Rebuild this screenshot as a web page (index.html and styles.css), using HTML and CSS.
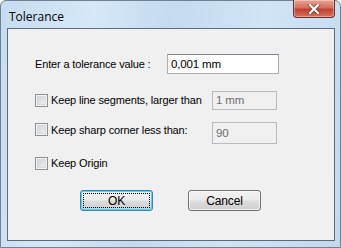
FILE: index.html
```html
<!DOCTYPE html>
<html lang="en">
<head>
    <meta charset="UTF-8">
    <title>Tolerance</title>
    <link rel="stylesheet" href="styles.css">
</head>
<body>
    <div class="window">
        <div class="titlebar">
            <span class="title">Tolerance</span>
            <div class="close-btn">
                <svg width="16" height="10" viewBox="0 0 16 10">
                    <path d="M4 1 L12 9 M12 1 L4 9" stroke="#3a2020" stroke-width="4" stroke-linecap="square" opacity="0.45"/>
                    <path d="M4 1 L12 9 M12 1 L4 9" stroke="#ffffff" stroke-width="2.2" stroke-linecap="square"/>
                </svg>
            </div>
        </div>
        <div class="client">
            <div class="row row-value">
                <span class="label">Enter a tolerance value :</span>
                <div class="textbox">0,001 mm</div>
            </div>
            <div class="row row-check">
                <div class="check-label">
                    <span class="checkbox"></span>
                    <span>Keep line segments, larger than</span>
                </div>
                <div class="textbox disabled">1 mm</div>
            </div>
            <div class="row row-check row-corner">
                <div class="check-label">
                    <span class="checkbox"></span>
                    <span>Keep sharp corner less than:</span>
                </div>
                <div class="textbox disabled tall">90</div>
            </div>
            <div class="row row-origin">
                <div class="check-label">
                    <span class="checkbox"></span>
                    <span>Keep Origin</span>
                </div>
            </div>
            <div class="buttons">
                <div class="button default"><span class="focus">OK</span></div>
                <div class="button">Cancel</div>
            </div>
        </div>
    </div>
</body>
</html>
```

FILE: styles.css
```css
* {
    margin: 0;
    padding: 0;
    box-sizing: border-box;
}

body {
    width: 341px;
    height: 248px;
    overflow: hidden;
    background: #ffffff;
}

/* Aero frame */
.window {
    width: 341px;
    height: 248px;
    display: flex;
    flex-direction: column;
    border: 1px solid #6f8193;
    border-radius: 6px 6px 0 0;
    background: linear-gradient(100deg, #c6dcf0 0%, #d6e8f7 25%, #c4daef 45%, #d0e4f5 70%, #c2d9ee 100%);
    padding: 0 5px 6px 6px;
    font-family: "Liberation Sans", Arial, sans-serif;
    font-size: 11px;
    letter-spacing: -0.15px;
    color: #000;
}

.titlebar {
    height: 27px;
    display: flex;
    align-items: flex-start;
    justify-content: space-between;
    flex-shrink: 0;
}

.title {
    font-family: "Open Sans", "Noto Sans", sans-serif;
    font-size: 12px;
    letter-spacing: 0;
    margin-top: 7px;
    margin-left: 2px;
    color: #000;
}

.close-btn {
    width: 42px;
    height: 18px;
    margin-top: -1px;
    border: 1px solid #6b3030;
    border-top: none;
    border-radius: 0 0 4px 4px;
    background: linear-gradient(#e8a492 0%, #d4705f 45%, #c0402e 55%, #d8735a 100%);
    box-shadow: inset 0 0 0 1px rgba(255, 255, 255, 0.35);
    display: flex;
    align-items: center;
    justify-content: center;
}

/* dialog body */
.client {
    flex: 1;
    background: #f0f0f0;
    border: 1px solid #5d6b7a;
    padding: 25px 0 0 27px;
    display: flex;
    flex-direction: column;
}

.row {
    display: flex;
    align-items: center;
}

.row-value {
    height: 20px;
}

.row-value .label {
    width: 132px;
}

.row-check {
    height: 20px;
    margin-top: 16px;
}

.row-corner {
    height: 22px;
    margin-top: 12px;
    align-items: flex-start;
}

.row-corner .check-label {
    margin-top: 1px;
}

.row-origin {
    height: 14px;
    margin-top: 12px;
}

.check-label {
    width: 177px;
    display: flex;
    align-items: center;
    gap: 3px;
}

.checkbox {
    width: 13px;
    height: 13px;
    border: 1px solid #8e8f8f;
    background: linear-gradient(135deg, #cbcfd5 0%, #f4f4f4 100%);
    box-shadow: inset 0 0 0 1px #f4f4f4, inset 0 0 0 2px #d6d9de;
    flex-shrink: 0;
}

.textbox {
    width: 112px;
    height: 20px;
    background: #fff;
    border: 1px solid #abadb3;
    border-top-color: #7f8288;
    padding: 0 3px;
    line-height: 18px;
    font-size: 11.5px;
}

.textbox.disabled {
    width: 65px;
    height: 19px;
    background: #f0f0f0;
    border-color: #b7bcc0;
    color: #6d6d6d;
    line-height: 17px;
}

.textbox.tall {
    height: 22px;
    line-height: 20px;
}

.buttons {
    display: flex;
    gap: 35px;
    margin-top: 20px;
    margin-left: 45px;
}

.button {
    width: 73px;
    height: 21px;
    border: 1px solid #707070;
    border-radius: 3px;
    background: linear-gradient(#f2f2f2 0%, #ebebeb 48%, #dddddd 52%, #cfcfcf 100%);
    box-shadow: inset 0 0 0 1px rgba(255, 255, 255, 0.7);
    display: flex;
    align-items: center;
    justify-content: center;
    font-size: 12px;
}

.button.default {
    border-color: #3c7fb1;
    box-shadow: inset 0 0 0 1px #48d8fb;
    padding: 2px;
}

.button .focus {
    width: 100%;
    height: 100%;
    border: 1px dotted #000;
    display: flex;
    align-items: center;
    justify-content: center;
}
```
